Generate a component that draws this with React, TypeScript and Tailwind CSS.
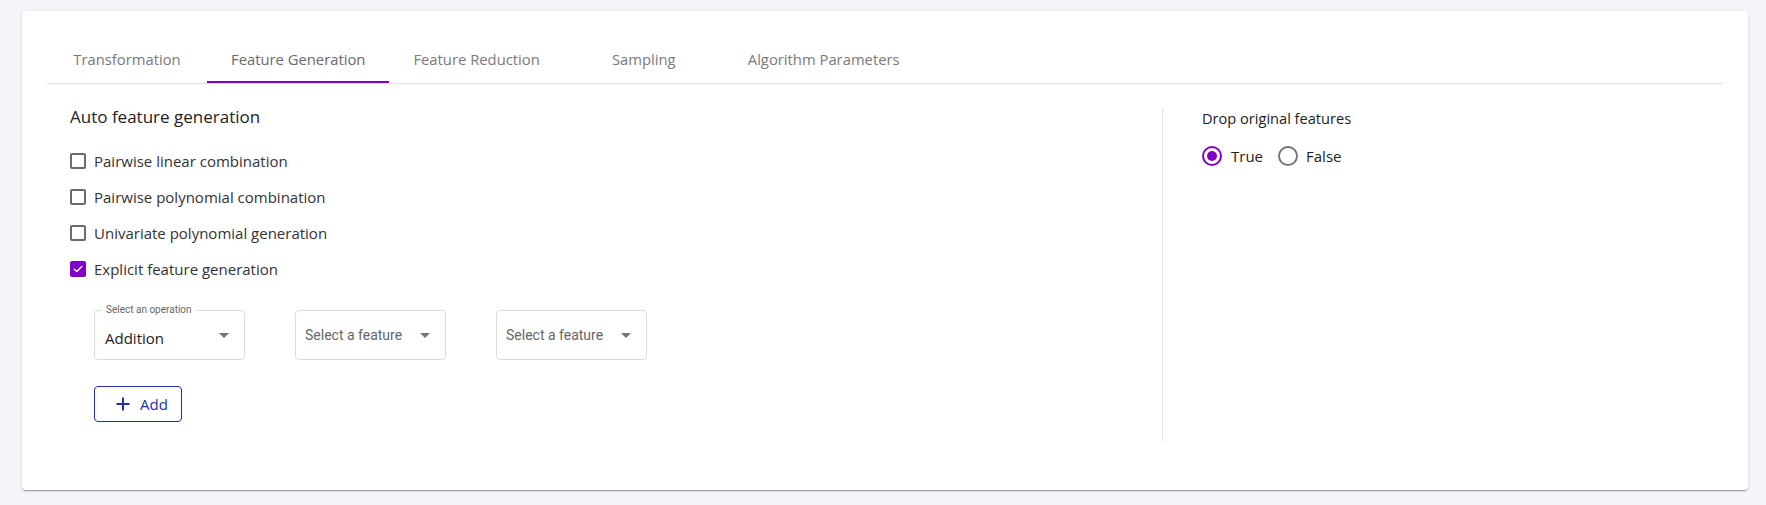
import React from "react";

function Checkbox({ checked }: { checked?: boolean }) {
  if (checked) {
    return (
      <span className="flex h-[16px] w-[16px] items-center justify-center rounded-[2px] bg-[#8000c4]">
        <svg width="12" height="12" viewBox="0 0 12 12" fill="none">
          <path d="M2.2 6.2 L4.8 8.6 L9.8 3.4" stroke="white" strokeWidth="1.4" strokeLinecap="round" strokeLinejoin="round" />
        </svg>
      </span>
    );
  }
  return <span className="block h-[16px] w-[16px] rounded-[2px] border-2 border-[#6b6b6b]" />;
}

function Radio({ checked }: { checked?: boolean }) {
  return checked ? (
    <span className="flex h-[20px] w-[20px] items-center justify-center rounded-full border-2 border-[#8000c4]">
      <span className="block h-[10px] w-[10px] rounded-full bg-[#8000c4]" />
    </span>
  ) : (
    <span className="block h-[20px] w-[20px] rounded-full border-2 border-[#757575]" />
  );
}

function Arrow() {
  return (
    <svg width="10" height="5" viewBox="0 0 10 5" className="shrink-0">
      <path d="M0 0 L10 0 L5 5 Z" fill="#757575" />
    </svg>
  );
}

export default function App() {
  const tabs = ["Transformation", "Feature Generation", "Feature Reduction", "Sampling", "Algorithm Parameters"];
  const checks = [
    { label: "Pairwise linear combination", checked: false },
    { label: "Pairwise polynomial combination", checked: false },
    { label: "Univariate polynomial generation", checked: false },
    { label: "Explicit feature generation", checked: true },
  ];
  return (
    <div
      className="min-h-screen bg-[#f4f5f9] pl-[22px] pr-[18px] pt-[11px]"
      style={{ fontFamily: "'Open Sans', 'DejaVu Sans', sans-serif" }}
    >
      <div className="h-[479px] rounded-[4px] bg-white px-[25px] pt-[24px] shadow-[0_2px_1px_-1px_rgba(0,0,0,0.2),0_1px_1px_0_rgba(0,0,0,0.14),0_1px_3px_0_rgba(0,0,0,0.12)]">
        <div className="flex border-b border-[#e0e0e0]">
          {tabs.map((t, i) => (
            <div
              key={t}
              className={`relative flex h-[48px] min-w-[160px] items-center justify-center px-6 text-[14.8px] ${
                i === 1 ? "text-[#6a6a6a]" : "text-[#7a7a7a]"
              }`}
            >
              {t}
              {i === 1 && <span className="absolute bottom-0 left-0 right-0 h-[2px] bg-[#8000c4]" />}
            </div>
          ))}
        </div>

        <div className="mt-6 flex">
          <div className="h-[333px] w-[1116px] shrink-0 border-r border-[#e0e0e0] pl-[23px]">
            <div className="text-[17px] leading-[18px] text-[#222]">Auto feature generation</div>
            <div className="mt-[17px] flex flex-col">
              {checks.map((c) => (
                <div key={c.label} className="flex h-[36px] items-center">
                  <Checkbox checked={c.checked} />
                  <span className="ml-[8px] text-[15px] text-[#333]">{c.label}</span>
                </div>
              ))}
            </div>

            <div className="ml-[24px] mt-[23px] flex gap-[50px]">
              <div className="relative flex h-[50px] w-[151px] items-center justify-between rounded-[4px] border border-[#dcdcdc] pl-[10px] pr-[15px]">
                <span
                  className="absolute -top-[7px] left-[7px] bg-white px-[4px] text-[10px] leading-[12px] text-[#666]"
                  style={{ fontFamily: "Roboto, sans-serif" }}
                >
                  Select an operation
                </span>
                <span className="mt-[6px] text-[15px] text-[#222]">Addition</span>
                <Arrow />
              </div>
              {[0, 1].map((k) => (
                <div
                  key={k}
                  className="flex h-[50px] w-[151px] items-center justify-between rounded-[4px] border border-[#dcdcdc] pl-[9px] pr-[15px]"
                >
                  <span className="text-[14px] text-[#666]" style={{ fontFamily: "Roboto, sans-serif" }}>
                    Select a feature
                  </span>
                  <Arrow />
                </div>
              ))}
            </div>

            <button className="ml-[24px] mt-[26px] flex h-[36px] w-[88px] items-center gap-[10px] rounded-[4px] border-[1.5px] border-[#2133a3] pl-[21px] text-[15px] text-[#2133a3]">
              <svg width="14" height="14" viewBox="0 0 14 14">
                <path d="M7 0.5 V13.5 M0.5 7 H13.5" stroke="#2133a3" strokeWidth="2" />
              </svg>
              <span>Add</span>
            </button>
          </div>

          <div className="flex-1 pl-[39px]">
            <div className="text-[14.6px] leading-[20px] text-[#222]">Drop original features</div>
            <div className="mt-[17px] flex items-center">
              <Radio checked />
              <span className="ml-[9px] text-[15px] text-[#222]">True</span>
              <span className="ml-[15px]">
                <Radio />
              </span>
              <span className="ml-[8px] text-[15px] text-[#222]">False</span>
            </div>
          </div>
        </div>
      </div>
    </div>
  );
}
